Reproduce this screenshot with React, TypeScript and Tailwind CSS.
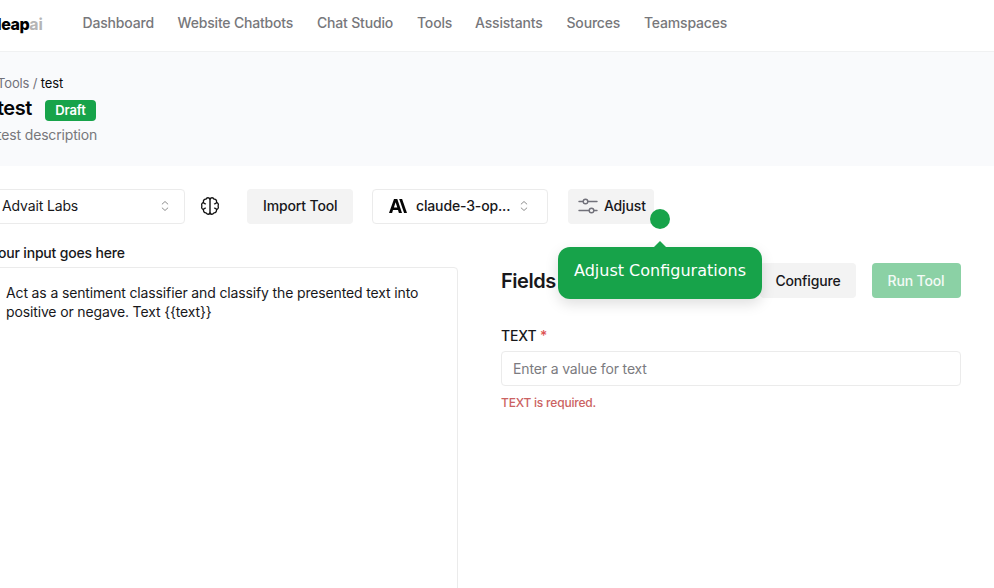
import React from "react";

const inter = "font-['Inter',sans-serif]";

const navItems: { label: string; width: string }[] = [
  { label: "Dashboard", width: "w-[95px]" },
  { label: "Website Chatbots", width: "w-[139.5px]" },
  { label: "Chat Studio", width: "w-[100px]" },
  { label: "Tools", width: "w-[58px]" },
  { label: "Assistants", width: "w-[91.5px]" },
  { label: "Sources", width: "w-[77.5px]" },
  { label: "Teamspaces", width: "w-[90px]" },
];

function UpDown() {
  return (
    <svg className="-mt-px" width="14" height="14" viewBox="0 0 15 15" fill="none" stroke="#858585" strokeWidth="1" strokeLinecap="round" strokeLinejoin="round">
      <path d="M4.500 5.400 7.500 2.700l3 2.700M4.500 9.600l3 2.700 3-2.700" />
    </svg>
  );
}

function BrainIcon() {
  return (
    <svg width="20" height="20" viewBox="0 0 20 20" fill="none" stroke="#111" strokeWidth="1.3" strokeLinecap="round" strokeLinejoin="round">
      <path d="M10 2.500v15" strokeWidth="1.400" />
      <path d="M10 3C9.200 1.400 6.700 1.200 6 3.200 4.200 3 3 4.500 3.500 6.300 1.900 7 1.200 8.500 1.900 10c-.7 1.600.1 3.200 1.600 3.700-.3 1.900.9 3.200 2.500 3.100.8 1.900 3.200 1.900 4 .3" />
      <path d="M10 3c.8-1.600 3.300-1.800 4 .2 1.800-.2 3 1.300 2.500 3.100 1.600.7 2.300 2.200 1.600 3.700.7 1.600-.1 3.200-1.600 3.700.3 1.900-.9 3.200-2.500 3.100-.8 1.900-3.200 1.900-4 .3" />
      <path d="M3.500 6.300c.2.900.9 1.500 2 1.500M16.500 6.300c-.2.900-.9 1.500-2 1.500M3.500 13.700c.1-1.100.900-1.600 2-1.600M16.500 13.700c-.1-1.100-.9-1.600-2-1.600" />
    </svg>
  );
}

function AdjustIcon() {
  return (
    <svg className="-mt-px" width="20" height="18" viewBox="0 0 20 18" fill="none" stroke="#71717a" strokeWidth="1.4" strokeLinecap="round">
      <path d="M1 4.500h4M10 4.500h9M1 13.500h10M16 13.500h3" />
      <circle cx="7.500" cy="4.500" r="2.300" />
      <circle cx="13.500" cy="13.500" r="2.300" />
    </svg>
  );
}

function AnthropicLogo() {
  return (
    <svg className="-mt-px" width="18" height="14" viewBox="0 0 18 13" preserveAspectRatio="none" fill="#050505">
      <path fillRule="evenodd" d="M5 0h3.300l4.700 13H9.900L9 10.200H4L3.100 13H0ZM6.600 3 4.900 7.800h3.400Z" />
      <path d="M10.200 0h2.900L18 13h-2.900Z" />
    </svg>
  );
}

export default function App() {
  return (
    <div className={`${inter} h-[588px] w-[994px] overflow-hidden bg-white text-sm tracking-[-0.14px] text-[#18181b]`}>
      <header className="flex h-[52px] border-b border-[#f0f1f2] bg-white">
        <div className="w-[82.500px] shrink-0">
          <div className="-ml-[3px] pt-[12px] text-[16px] leading-6 font-extrabold tracking-[-0.400px] text-black">
            leap<span className="font-bold tracking-[-0.100px] text-[#b5b5b5]">ai</span>
          </div>
        </div>
        <nav className="flex pt-[13px] leading-5 font-medium tracking-[-0.180px] text-[#77777b]">
          {navItems.map((item) => (
            <a key={item.label} className={`${item.width} shrink-0 whitespace-nowrap`}>{item.label}</a>
          ))}
        </nav>
      </header>

      <section className="h-[114px] bg-[#f9fafc] pt-[21px]">
        <div className="-ml-[3px] text-[13px] leading-5 text-[#71717a]">
          Tools / <span className="text-[#09090b]">test</span>
        </div>
        <div className="flex h-[30px] items-center">
          <h1 className="-ml-[3px] w-[48px] text-[20px] leading-7 font-semibold tracking-[-0.500px] text-[#050507]">test</h1>
          <span className="mt-[5px] flex h-[21px] w-[51px] items-center justify-center rounded-[4px] bg-[#17a34a] text-[13px] font-semibold tracking-[-0.100px] text-white">Draft</span>
        </div>
        <p className="-ml-[3px] pt-[2px] leading-5 tracking-[-0.160px] text-[#77777b]">test description</p>
      </section>

      <div className="flex h-[58px] pt-[23px] font-medium">
        <div className="-ml-2 flex h-[35px] w-[193px] items-center justify-between rounded-[4px] border border-[#ebebeb] pr-[12px] pl-[9px] font-normal">
          <span className="-mt-[2px]">Advait Labs</span>
          <UpDown />
        </div>
        <div className="ml-[15px] flex h-[34px] w-[20px] items-center justify-center"><BrainIcon /></div>
        <button className="ml-[27.400px] h-[35px] w-[105.600px] rounded-[4px] bg-[#f3f3f3] pb-[2px]">Import Tool</button>
        <div className="ml-[19.500px] flex h-[35px] w-[176px] items-center rounded-[4px] border border-[#ebebeb] pl-[16px]">
          <AnthropicLogo />
          <span className="-mt-[2px] ml-[8.500px] w-[101px]">claude-3-op...</span>
          <UpDown />
        </div>
        <button className="relative ml-[19.400px] flex h-[35px] w-[86px] items-center rounded-[4px] bg-[#f3f3f3] pl-[10px]">
          <AdjustIcon />
          <span className="-mt-[2px] ml-[6px]">Adjust</span>
          <span className="absolute top-[19.500px] left-[82px] size-[20px] rounded-full bg-[#17a34a]" />
        </button>
      </div>

      <main className="flex h-[364px]">
        <section className="w-[458px] shrink-0 pt-[19px]">
          <h2 className="-ml-[2px] h-[24px] leading-5 font-medium tracking-[-0.180px]">our input goes here</h2>
          <div className="-ml-[4px] h-[340px] w-[462px] rounded-tr-[4px] border border-[#ebebeb] pt-[15px] pl-[9px] leading-[19px]">
            Act as a sentiment classifier and classify the presented text into<br />
            positive or negave. Text {"{{text}}"}
          </div>
        </section>

        <section className="ml-[43px] w-[459.500px] pt-[39px]">
          <div className="relative flex h-[35px] items-center font-medium">
            <h2 className="mr-auto pt-[2px] text-[20px] font-semibold tracking-[-0.450px]">Fields</h2>
            <button className="h-[35px] w-[96px] rounded-[4px] bg-[#f3f3f3]">Configure</button>
            <button className="ml-[15.500px] h-[35px] w-[89px] rounded-[4px] bg-[#8bd1a5] text-white/90">Run Tool</button>
            <div className="absolute top-[-16px] left-[57px] flex h-[52px] w-[204px] justify-center rounded-[12px] bg-[#17a34a] pt-[12px] font-['DejaVu_Sans',sans-serif] text-[16px] leading-6 font-normal tracking-normal whitespace-nowrap text-white shadow-[0_5px_14px_rgba(0,0,0,0.13)]">
              Adjust Configurations
              <svg className="absolute -top-[6px] left-[96px]" width="12" height="6" viewBox="0 0 12 6"><path d="m0 6 6-6 6 6Z" fill="#17a34a" /></svg>
            </div>
          </div>
          <label className="mt-[28px] block leading-5 font-medium">TEXT <span className="text-[#dd5353]">*</span></label>
          <input className="mt-[5px] block h-[35px] w-full rounded-[4px] border border-[#ebebeb] px-[11px] outline-none placeholder:text-[#7b7b80]" placeholder="Enter a value for text" />
          <p className="mt-[9px] text-[12px] leading-4 font-medium tracking-[-0.200px] text-[#cb6262]">TEXT is required.</p>
        </section>
      </main>
    </div>
  );
}
